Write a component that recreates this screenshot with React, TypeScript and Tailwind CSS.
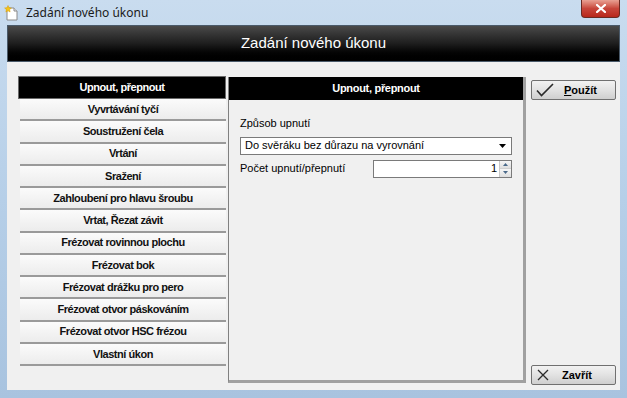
import React from 'react';

const items = [
  'Upnout, přepnout',
  'Vyvrtávání tyčí',
  'Soustružení čela',
  'Vrtání',
  'Sražení',
  'Zahloubení pro hlavu šroubu',
  'Vrtat, Řezat závit',
  'Frézovat rovinnou plochu',
  'Frézovat bok',
  'Frézovat drážku pro pero',
  'Frézovat otvor páskováním',
  'Frézovat otvor HSC frézou',
  'Vlastní úkon',
];

function WindowIcon() {
  return (
    <svg width="16" height="16" viewBox="0 0 16 16">
      <path d="M3 3h7l3 3v9H3z" fill="#fff" stroke="#8a8a8a" strokeWidth="1" />
      <path d="M10 3v3h3" fill="#e8e8e8" stroke="#8a8a8a" strokeWidth="1" />
      <path d="M4 0.5l1 2.2 2.4.3-1.8 1.6.5 2.4L4 5.8 1.9 7l.5-2.4L.6 3l2.4-.3z" fill="#f5c518" stroke="#d89a00" strokeWidth="0.5" />
    </svg>
  );
}

function SpinArrows() {
  return (
    <div className="flex h-full w-[12px] flex-col border-l border-[#c8c8c8]">
      <div className="flex flex-1 items-center justify-center border-b border-[#d0d0d0] bg-gradient-to-b from-[#f6f6f6] to-[#dedede]">
        <svg width="5" height="3" viewBox="0 0 5 3"><path d="M0 3L2.5 0 5 3z" fill="#4a6a8a" /></svg>
      </div>
      <div className="flex flex-1 items-center justify-center bg-gradient-to-b from-[#f6f6f6] to-[#dedede]">
        <svg width="5" height="3" viewBox="0 0 5 3"><path d="M0 0h5L2.5 3z" fill="#4a6a8a" /></svg>
      </div>
    </div>
  );
}

export default function App() {
  return (
    <div
      className="flex h-[398px] w-[627px] flex-col overflow-hidden bg-gradient-to-b from-[#c9dcef] via-[#b6cfe8] to-[#a8c3df] text-[11px] text-black"
      style={{ fontFamily: '"Liberation Sans", Arial, sans-serif' }}
    >
      {/* title bar */}
      <div className="relative flex h-[25px] shrink-0 items-center gap-[6px] pl-[4px]">
        <WindowIcon />
        <span className="text-[12px] text-[#1a1a1a]" style={{ fontFamily: '"Noto Sans", sans-serif' }}>
          Zadání nového úkonu
        </span>
        <div className="absolute right-[7px] top-0 flex h-[18px] w-[39px] items-center justify-center rounded-b-[4px] border border-t-0 border-[#6b2a22] bg-gradient-to-b from-[#e8a093] via-[#c7453a] to-[#b8261a]">
          <svg width="10" height="9" viewBox="0 0 10 9">
            <path d="M1 1l8 7M9 1L1 8" stroke="#fff" strokeWidth="2.2" strokeLinecap="square" />
          </svg>
        </div>
      </div>

      {/* client */}
      <div className="flex flex-1 flex-col px-[7px] pb-[8px]">
        <div className="flex h-[37px] shrink-0 items-center justify-center border border-[#4a5a6a] bg-gradient-to-b from-[#4a4a4a] via-[#1e1e1e] to-[#000]">
          <span className="text-[15px] text-white">Zadání nového úkonu</span>
        </div>

        <div className="flex flex-1 bg-[#f0f0f0] pl-[11px] pt-[14px]">
          {/* left list */}
          <div className="flex w-[208px] flex-col tracking-[-0.45px]">
            {items.map((label, i) =>
              i === 0 ? (
                <div
                  key={label}
                  className="flex h-[23px] items-center justify-center border border-[#6a6a6a] bg-black font-bold text-white"
                >
                  {label}
                </div>
              ) : (
                <div
                  key={label}
                  className="ml-[2px] flex h-[22.25px] items-center justify-center border-b-2 border-[#9a9a9a] bg-gradient-to-b from-[#fbfbfb] to-[#ececec] font-bold text-[#111]"
                >
                  {label}
                </div>
              ),
            )}
          </div>

          {/* middle panel */}
          <div className="ml-[2px] mb-[7px] mt-[1px] flex w-[298px] flex-col border-b-[3px] border-l border-r-[3px] border-[#a0a0a0] border-l-[#808080]">
            <div className="flex h-[23px] items-center justify-center bg-black font-bold tracking-[-0.3px] text-white">
              Upnout, přepnout
            </div>
            <div className="flex flex-col px-[11px] pt-[15px]">
              <span>Způsob upnutí</span>
              <div className="mt-[5px] flex h-[18px] items-center justify-between border border-[#7a7a7a] bg-white pl-[4px] pr-[5px]">
                <span>Do svěráku bez důrazu na vyrovnání</span>
                <svg width="7" height="4" viewBox="0 0 7 4"><path d="M0 0h7L3.5 4z" fill="#000" /></svg>
              </div>
              <div className="mt-[5px] flex items-center justify-between">
                <span>Počet upnutí/přepnutí</span>
                <div className="flex h-[18px] w-[139px] items-center border border-[#7a7a7a] bg-white">
                  <span className="flex-1 pr-[2px] text-right">1</span>
                  <SpinArrows />
                </div>
              </div>
            </div>
          </div>

          {/* right buttons */}
          <div className="flex flex-1 flex-col justify-between pb-[5px] pl-[5px] pr-[4px] pt-[4px]">
            <div className="flex h-[20px] items-center rounded-[2px] border border-[#707070] bg-gradient-to-b from-[#f2f2f2] via-[#e2e2e2] to-[#cfcfcf] pl-[4px]">
              <svg width="18" height="14" viewBox="0 0 18 14">
                <path d="M1 7.5l4.5 5L17 1" fill="none" stroke="#2a2a2a" strokeWidth="1.6" />
              </svg>
              <span className="ml-[10px] font-bold">
                <span className="underline">P</span>oužít
              </span>
            </div>
            <div className="flex h-[20px] items-center rounded-[2px] border border-[#707070] bg-gradient-to-b from-[#f2f2f2] via-[#e2e2e2] to-[#cfcfcf] pl-[5px]">
              <svg width="12" height="12" viewBox="0 0 12 12">
                <path d="M1 1l10 10M11 1L1 11" stroke="#2a2a2a" strokeWidth="1.3" />
              </svg>
              <span className="ml-[13px] font-bold">Zavřít</span>
            </div>
          </div>
        </div>
      </div>
    </div>
  );
}
